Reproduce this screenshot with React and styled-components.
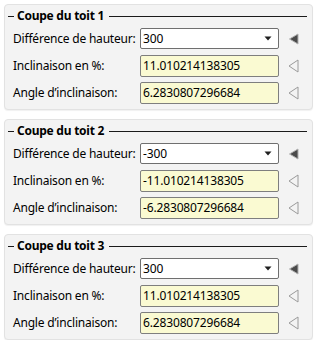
import React from "react";
import styled, { createGlobalStyle } from "styled-components";

const Global = createGlobalStyle`
  html, body { margin: 0; padding: 0; background: #ffffff; }
  body { font-family: "Noto Sans", "Open Sans", sans-serif; font-size: 12px; color: #000; }
  * { box-sizing: border-box; }
`;

const Page = styled.div`
  width: 318px;
  padding: 4px 0 0 4px;
  display: flex;
  flex-direction: column;
  gap: 9px;
`;

const Panel = styled.section`
  width: 309px;
  background: #f3f3f3;
  border: 1px solid #e2e2e2;
  border-radius: 4px;
  box-shadow: 0 1px 1px rgba(0, 0, 0, 0.06);
  padding: 3px 5px 5px 3px;
  display: flex;
  flex-direction: column;
  gap: 4px;
`;

const Header = styled.div`
  height: 16px;
  display: flex;
  align-items: center;
  gap: 3px;
`;

const Rule = styled.span`
  height: 1px;
  background: #1a1a1a;
  width: ${(p) => (p.$grow ? "auto" : "6px")};
  flex: ${(p) => (p.$grow ? "1 1 auto" : "0 0 6px")};
  margin-left: ${(p) => (p.$grow ? "2px" : "0")};
`;

const Title = styled.span`
  font-weight: 700;
  font-size: 12px;
  letter-spacing: -0.25px;
  line-height: 16px;
  white-space: nowrap;
`;

const Rows = styled.div`
  display: grid;
  grid-template-columns: 127px 139px 20px;
  grid-auto-rows: 22px;
  row-gap: 5px;
  padding-left: 5px;
  align-items: center;
`;

const Label = styled.span`
  font-size: 12px;
  white-space: nowrap;
  line-height: 16px;
  letter-spacing: -0.2px;
`;

const Field = styled.div`
  height: ${(p) => (p.$combo ? "21px" : "22px")};
  border: 1px solid ${(p) => (p.$combo ? "#6f6f6f" : "#7e7e7e")};
  border-radius: 2px;
  background: ${(p) => (p.$combo ? "#ffffff" : "#fafad2")};
  display: flex;
  align-items: center;
  padding: 0 6px 0 2px;
  font-size: 12px;
  line-height: 16px;
  letter-spacing: -0.15px;
  align-self: ${(p) => (p.$combo ? "start" : "center")};
`;

const Value = styled.span`
  flex: 1 1 auto;
`;

const Side = styled.div`
  display: flex;
  align-items: center;
  justify-content: flex-end;
  height: 100%;
`;

const DropArrow = () => (
  <svg width="8" height="5" viewBox="0 0 8 5">
    <path d="M0.5 0.5 L7.5 0.5 L4 4.5 Z" fill="#1f1f1f" />
  </svg>
);

const SolidTri = () => (
  <svg width="11" height="12" viewBox="0 0 11 12">
    <path d="M10 1 L10 11 L1.5 6 Z" fill="#4a4a4a" stroke="#b0b0b0" strokeWidth="1" strokeLinejoin="round" />
  </svg>
);

const OutlineTri = () => (
  <svg width="11" height="14" viewBox="0 0 11 14">
    <path d="M10 1 L10 13 L1 7 Z" fill="none" stroke="#9a9a9a" strokeWidth="1" strokeLinejoin="round" />
  </svg>
);

const data = [
  { n: 1, h: "300", inc: "11.010214138305", ang: "6.2830807296684" },
  { n: 2, h: "-300", inc: "-11.010214138305", ang: "-6.2830807296684" },
  { n: 3, h: "300", inc: "11.010214138305", ang: "6.2830807296684" },
];

function Section({ n, h, inc, ang }) {
  return (
    <Panel>
      <Header>
        <Rule />
        <Title>Coupe du toit {n}</Title>
        <Rule $grow />
      </Header>
      <Rows>
        <Label>Différence de hauteur:</Label>
        <Field $combo>
          <Value>{h}</Value>
          <DropArrow />
        </Field>
        <Side>
          <SolidTri />
        </Side>
        <Label>Inclinaison en %:</Label>
        <Field>
          <Value>{inc}</Value>
        </Field>
        <Side>
          <OutlineTri />
        </Side>
        <Label>Angle d’inclinaison:</Label>
        <Field>
          <Value>{ang}</Value>
        </Field>
        <Side>
          <OutlineTri />
        </Side>
      </Rows>
    </Panel>
  );
}

export default function App() {
  return (
    <>
      <Global />
      <Page>
        {data.map((d) => (
          <Section key={d.n} {...d} />
        ))}
      </Page>
    </>
  );
}
